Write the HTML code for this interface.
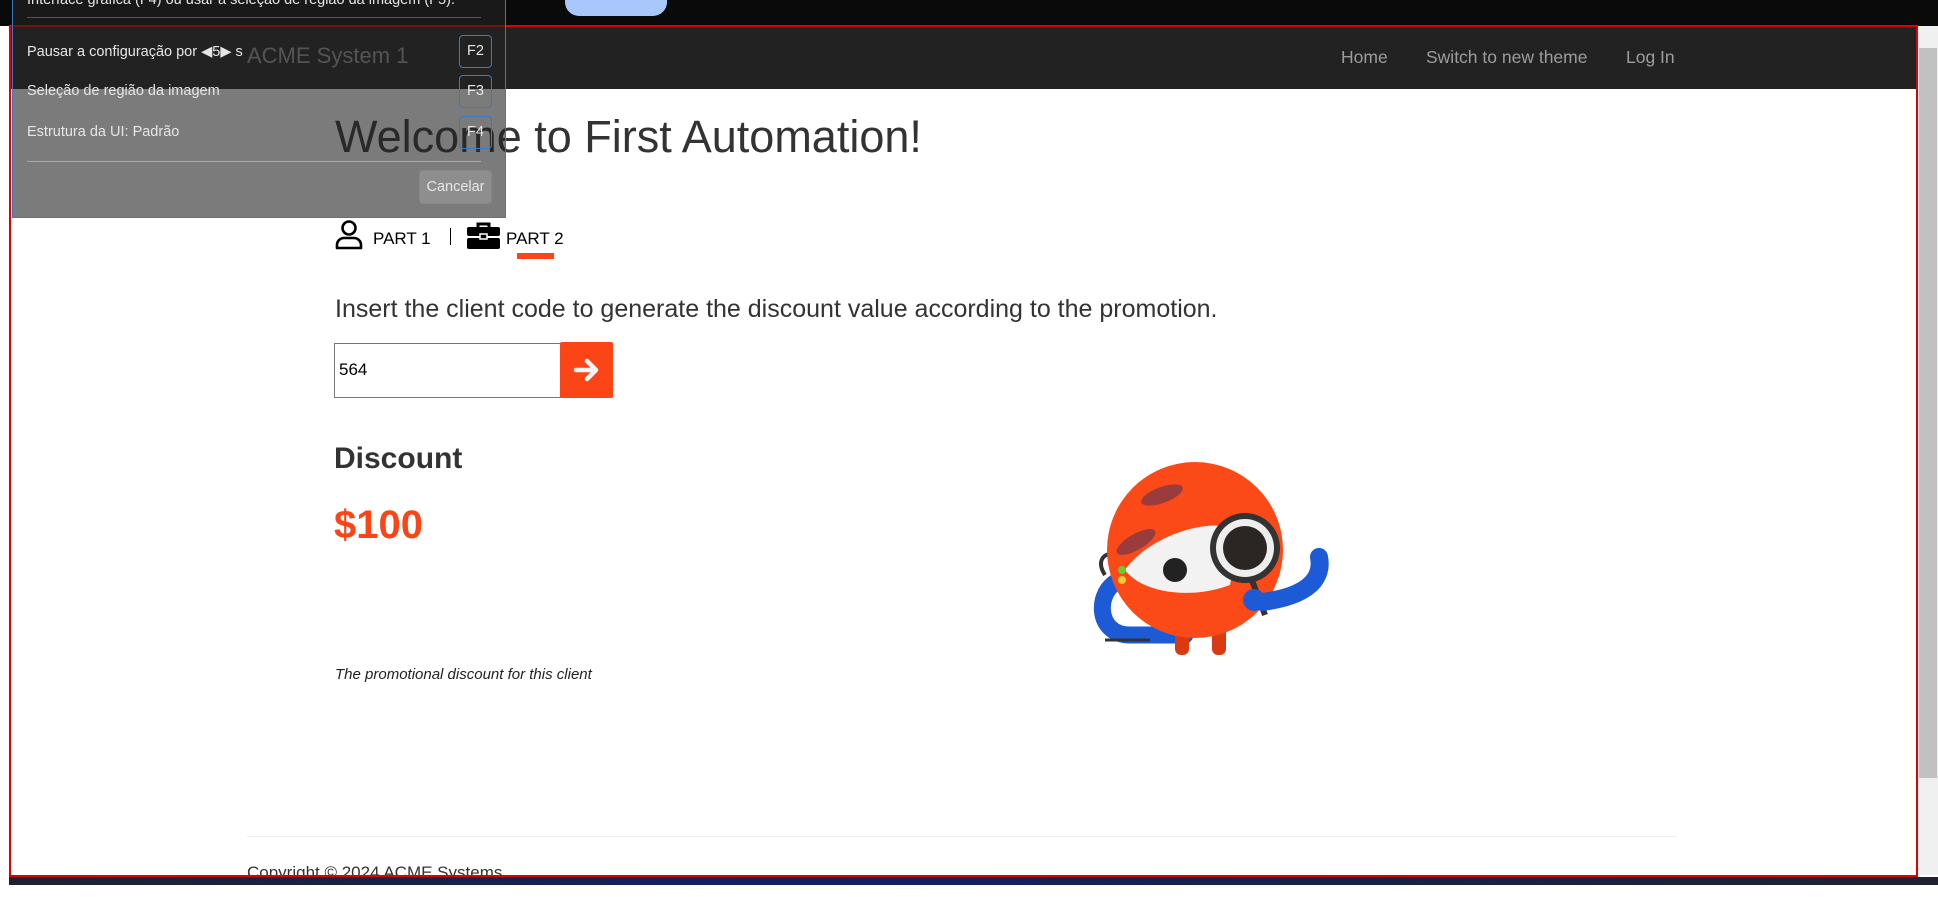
<!DOCTYPE html>
<html><head><meta charset="utf-8"><style>
*{box-sizing:border-box;margin:0;padding:0}
body{width:1938px;height:897px;position:relative;overflow:hidden;background:#fff;font-family:"Liberation Sans",Arial,sans-serif;color:#333}
.abs{position:absolute}
.or{color:#fb4516}
</style></head><body>
<div class="abs" style="left:0;top:0;width:1938px;height:26px;background:#0a0a0a"></div>
<div class="abs" style="left:565px;top:0;width:102px;height:16px;background:#a8c7fa;border-radius:0 0 14px 14px"></div>
<div class="abs" style="left:9px;top:26px;width:1909px;height:63px;background:#222"></div>
<div class="abs" style="left:247px;top:43px;font-size:22px;color:#9d9d9d">ACME System 1</div>
<div class="abs" style="left:1341px;top:47px;font-size:17.5px;color:#9d9d9d">Home</div>
<div class="abs" style="left:1426px;top:47px;font-size:17.5px;color:#9d9d9d">Switch to new theme</div>
<div class="abs" style="left:1626px;top:47px;font-size:17.5px;color:#9d9d9d">Log In</div>
<div class="abs" style="left:1918px;top:26px;width:20px;height:852px;background:#f0f0f0"></div>
<div class="abs" style="left:1919px;top:48px;width:18px;height:730px;background:#c1c1c1"></div>
<div class="abs" style="left:335px;top:111px;font-size:45px">Welcome to First Automation!</div>
<svg class="abs" style="left:335px;top:220px" width="28" height="30" viewBox="0 0 28 30"><circle cx="14" cy="8" r="6.5" fill="none" stroke="#000" stroke-width="2.6"/><path d="M2 28v-3a7 7 0 0 1 7-7h10a7 7 0 0 1 7 7v3z" fill="none" stroke="#000" stroke-width="2.6" stroke-linejoin="round"/></svg>
<div class="abs" style="left:373px;top:229px;font-size:17px;color:#000">PART 1</div>
<div class="abs" style="left:450px;top:228px;width:1px;height:17px;background:#000"></div>
<svg class="abs" style="left:467px;top:221px" width="33" height="28" viewBox="0 0 33 28"><path d="M11 6V3h11v3" fill="none" stroke="#000" stroke-width="3"/><rect x="0" y="6" width="33" height="9" rx="2"/><rect x="0" y="17" width="33" height="11" rx="2"/><rect x="13" y="13" width="7" height="5" fill="#000" stroke="#fff" stroke-width="1.5"/></svg>
<div class="abs" style="left:506px;top:229px;font-size:17px;color:#000">PART 2</div>
<div class="abs" style="left:517px;top:253px;width:37px;height:6px;background:#fb4516"></div>
<div class="abs" style="left:335px;top:295px;font-size:25px">Insert the client code to generate the discount value according to the promotion.</div>
<div class="abs" style="left:334px;top:343px;width:228px;height:55px;border:1px solid #767676;font-size:17px;padding:16px 0 0 4px;color:#000">564</div>
<div class="abs" style="left:560px;top:342px;width:53px;height:56px;background:#fb4516;border-radius:2px"></div>
<svg class="abs" style="left:573px;top:356px" width="28" height="28" viewBox="0 0 28 28"><path d="M3 14h20M14 5l9 9-9 9" fill="none" stroke="#f4f4f4" stroke-width="4.5" stroke-linecap="round" stroke-linejoin="round"/></svg>
<div class="abs" style="left:334px;top:442px;font-size:30px;font-weight:bold">Discount</div>
<div class="abs or" style="left:334px;top:503px;font-size:40px;font-weight:bold">$100</div>
<div class="abs" style="left:335px;top:666px;font-size:15px;font-style:italic;color:#222">The promotional discount for this client</div>
<svg class="abs" style="left:1075px;top:450px" width="260" height="215" viewBox="0 0 250 215">
<path d="M40 105c-15-5-25 5-15 20" fill="none" stroke="#333" stroke-width="4"/>
<path d="M40 130c-25 10-25 55 10 55h55" fill="none" stroke="#1d5bd6" stroke-width="17" stroke-linecap="round"/>
<path d="M25 190h45" stroke="#333" stroke-width="3"/>
<rect x="95" y="160" width="14" height="45" rx="6" fill="#d93a12"/><rect x="132" y="160" width="14" height="45" rx="6" fill="#d93a12"/>
<circle cx="115" cy="100" r="88" fill="#fb4a18"/>
<ellipse cx="82" cy="45" rx="22" ry="8" fill="#9b3c3c" transform="rotate(-20 82 45)"/>
<ellipse cx="56" cy="92" rx="22" ry="8" fill="#9b3c3c" transform="rotate(-30 56 92)"/>
<path d="M45 120c20-30 80-55 115-40l-10 55c-40 15-88 8-105-15z" fill="#f2f2f2"/>
<circle cx="95" cy="120" r="12" fill="#222"/>
<path d="M170 125l15 40" stroke="#333" stroke-width="6"/>
<circle cx="165" cy="98" r="35" fill="#333"/><circle cx="165" cy="98" r="29" fill="#eee"/><circle cx="165" cy="98" r="22" fill="#2b2623"/>
<path d="M182 152c40-5 62-20 57-45" fill="none" stroke="#1d5bd6" stroke-width="18" stroke-linecap="round"/>
<circle cx="174" cy="150" r="11" fill="#1d5bd6"/>
<circle cx="42" cy="120" r="4" fill="#6c3"/><circle cx="42" cy="130" r="4" fill="#ec3"/>
</svg>
<div class="abs" style="left:247px;top:836px;width:1430px;height:1px;background:#eee"></div>
<div class="abs" style="left:247px;top:863px;font-size:17px">Copyright © 2024 ACME Systems</div>
<div class="abs" style="left:0;top:875px;width:1938px;height:22px;background:#fff"></div>
<div class="abs" style="left:9px;top:877px;width:1929px;height:8px;background:linear-gradient(90deg,#1e2230,#12205f 40%,#1e2230)"></div>
<div class="abs" style="left:9px;top:25px;width:1909px;height:852px;border:2px solid #e00000"></div>
<div class="abs" style="left:12px;top:0;width:494px;height:218px;background:rgba(35,35,35,0.6);border:1px solid #3a7bc0;border-top:none;color:#e6e6e6;font-size:14.5px">
 <div class="abs" style="left:14px;top:-8px">Interface gráfica (F4) ou usar a seleção de região da imagem (F5).</div>
 <div class="abs" style="left:14px;top:17px;width:454px;height:1px;background:#555"></div>
 <div class="abs" style="left:14px;top:44px">Pausar a configuração por &#9664;5&#9654; s</div>
 <div class="abs" style="left:14px;top:83px">Seleção de região da imagem</div>
 <div class="abs" style="left:14px;top:124px">Estrutura da UI: Padrão</div>
 <div class="abs" style="left:446px;top:35px;width:33px;height:33px;border:1px solid #3a7bc0;border-radius:4px;text-align:center;line-height:31px">F2</div>
 <div class="abs" style="left:446px;top:75px;width:33px;height:33px;border:1px solid #3a7bc0;border-radius:4px;text-align:center;line-height:31px">F3</div>
 <div class="abs" style="left:446px;top:116px;width:33px;height:33px;border:1px solid #3a7bc0;border-radius:4px;text-align:center;line-height:31px">F4</div>
 <div class="abs" style="left:14px;top:161px;width:454px;height:1px;background:#aaa"></div>
 <div class="abs" style="left:406px;top:170px;width:73px;height:34px;background:rgba(255,255,255,0.15);border:1px solid #888;border-radius:4px;text-align:center;line-height:32px">Cancelar</div>
</div>
</body></html>
